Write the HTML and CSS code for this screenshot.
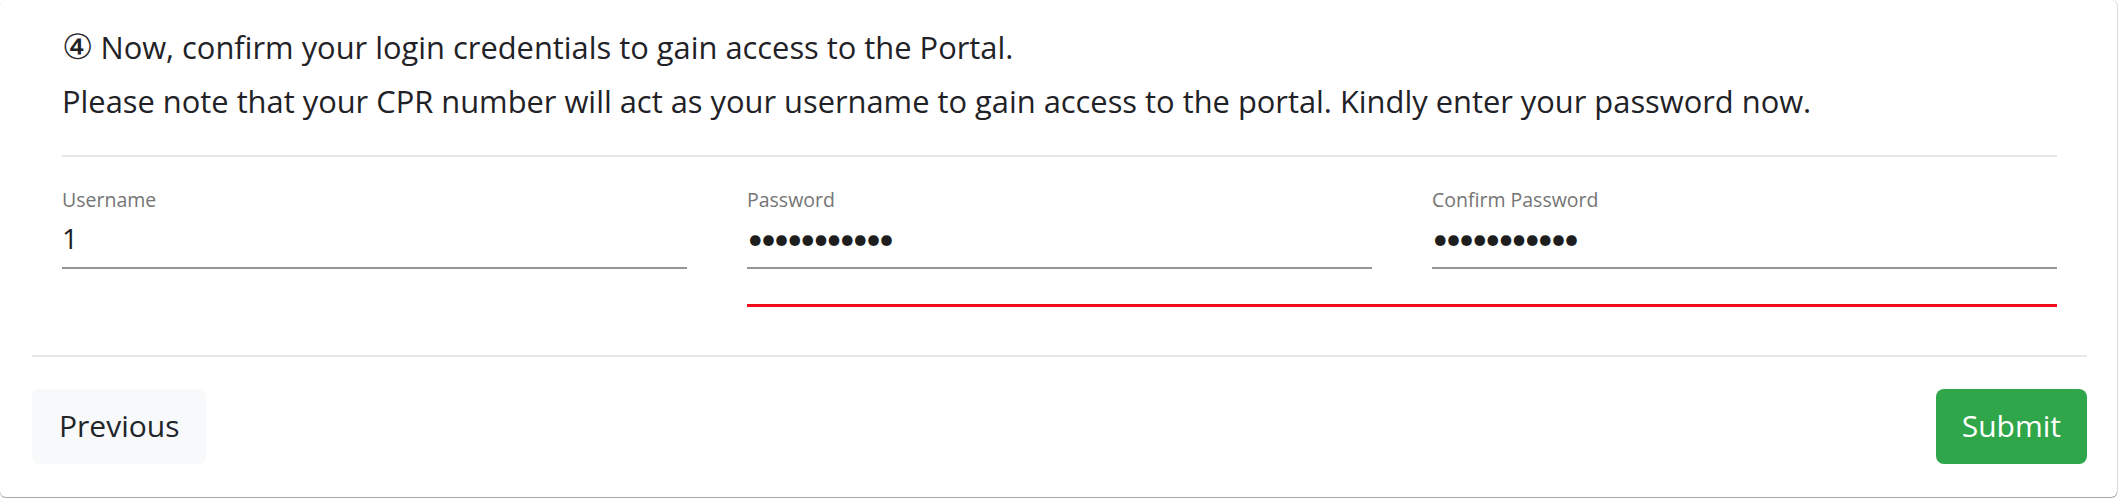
FILE: index.html
```
<!DOCTYPE html>
<html lang="en">
<head>
<meta charset="utf-8">
<title>Confirm login credentials</title>
<link rel="stylesheet" href="styles.css">
</head>
<body>
<div class="card">
  <section class="step">
    <p class="step-text"><span class="step-num">④</span> Now, confirm your login credentials to gain access to the Portal.</p>
    <p class="step-text">Please note that your CPR number will act as your username to gain access to the portal. Kindly enter your password now.</p>
    <hr class="rule rule-inner">
    <form class="cred-grid">
      <div class="field">
        <label class="field-label" for="username">Username</label>
        <input class="field-input" id="username" type="text" value="1">
      </div>
      <div class="field">
        <label class="field-label" for="password">Password</label>
        <input class="field-input field-secret" id="password" type="password" value="12345678901">
      </div>
      <div class="field">
        <label class="field-label" for="confirm">Confirm Password</label>
        <input class="field-input field-secret" id="confirm" type="password" value="12345678901">
      </div>
      <div class="strength-bar"></div>
    </form>
  </section>
  <hr class="rule rule-outer">
  <footer class="card-actions">
    <button class="btn btn-light" type="button">Previous</button>
    <button class="btn btn-success" type="button">Submit</button>
  </footer>
</div>
</body>
</html>
```
FILE: styles.css
```
html, body {
  margin: 0;
  padding: 0;
  background: #ffffff;
}

body {
  font-family: "Open Sans", "DejaVu Sans", sans-serif;
  color: #212529;
}

.card {
  box-sizing: border-box;
  width: 2117px;
  height: 497px;
  margin: 0 1px 1px 0;
  padding: 0 30px 0 32px;
  border-radius: 6px;
  background: #ffffff;
  box-shadow: 0 1px 1px rgba(0, 0, 0, 0.38), 1px 0 1px rgba(0, 0, 0, 0.12);
  display: flex;
  flex-direction: column;
}

.step {
  padding: 20px 30px 0;
}

.step-text {
  margin: 0;
  font-size: 30.85px;
  line-height: 54px;
  color: #1f2226;
  white-space: nowrap;
}

.step-num {
  font-family: "DejaVu Sans", sans-serif;
  font-size: 35px;
  line-height: 0;
  letter-spacing: -1px;
}

.rule {
  border: 0;
  border-top: 2px solid #e8e8e8;
  margin: 0;
}

.rule-inner {
  margin-top: 27px;
}

.rule-outer {
  margin-top: 48px;
}

.cred-grid {
  display: grid;
  grid-template-columns: repeat(3, 1fr);
  column-gap: 60px;
  margin: 28.5px 0 0;
}

.field {
  display: flex;
  flex-direction: column;
}

.field-label {
  font-size: 19.5px;
  line-height: 27px;
  color: #757575;
}

.field-input {
  box-sizing: border-box;
  width: 100%;
  height: 56px;
  margin: 0;
  padding: 0 0 4px;
  border: 0;
  border-bottom: 2px solid #959595;
  border-radius: 0;
  background: transparent;
  font-family: "Open Sans", sans-serif;
  font-size: 28px;
  color: #1e1e1e;
  outline: none;
}

.field-secret {
  font-family: Lato, sans-serif;
  font-size: 28.5px;
  letter-spacing: -3.4px;
}

.strength-bar {
  grid-column: 2 / 4;
  height: 3px;
  margin-top: 35px;
  background: #f00c1c;
}

.card-actions {
  display: flex;
  justify-content: space-between;
  align-items: center;
  padding: 32px 0;
}

.btn {
  font-family: "Open Sans", sans-serif;
  font-size: 30px;
  line-height: 45px;
  padding: 14px 27px 16px;
  border: 0;
  border-radius: 8px;
  cursor: pointer;
}

.btn-light {
  background: #f8f9fa;
  color: #212529;
}

.btn-success {
  background: #30a64a;
  color: #ffffff;
  padding-left: 26px;
  padding-right: 26px;
}
```
